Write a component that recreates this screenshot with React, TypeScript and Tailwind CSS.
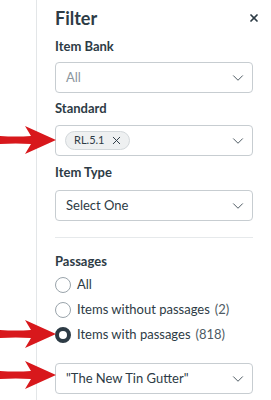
import { X, ChevronDown } from 'lucide-react';

function Arrow({ top }: { top: number }) {
  return (
    <svg
      className="absolute left-0"
      style={{ top }}
      width="57"
      height="30"
      viewBox="0 0 57 30"
    >
      <path
        d="M0 11 Q16 12 31 11 L25 1 L56 15 L25 29 L31 19 Q16 18 0 19 Z"
        fill="#d8181c"
      />
    </svg>
  );
}

function Select({ children, muted }: { children: React.ReactNode; muted?: boolean }) {
  return (
    <div
      className={`h-[31px] border border-[#c7cdd1] rounded-[4px] flex items-center justify-between pl-[10px] pr-[5px] text-[13px] ${
        muted ? 'text-[#8b969e]' : 'text-[#2d3b45]'
      }`}
    >
      <div className="flex items-center whitespace-nowrap">{children}</div>
      <ChevronDown size={18} strokeWidth={1.3} className="text-[#4a5660]" />
    </div>
  );
}

function Radio({ label, count, checked }: { label: string; count?: string; checked?: boolean }) {
  return (
    <div className="flex items-center h-[25px] whitespace-nowrap">
      <span
        className={`shrink-0 w-[16px] h-[16px] rounded-full bg-white ${
          checked ? 'border-[4px] border-[#2d3b45]' : 'border border-[#9aa4ab]'
        }`}
      />
      <span className="ml-[6px] text-[13px] text-[#2d3b45]">{label}</span>
      {count && <span className="ml-[5px] text-[13px] text-[#4f5b64]">{count}</span>}
    </div>
  );
}

function Label({ children, className }: { children: React.ReactNode; className: string }) {
  return (
    <div className={`text-[13px] font-bold text-[#2d3b45] leading-[20px] ${className}`}>{children}</div>
  );
}

export default function App() {
  return (
    <div
      className="relative w-[271px] h-[400px] bg-white overflow-hidden"
      style={{ fontFamily: 'Lato, "Open Sans", sans-serif' }}
    >
      <div className="ml-[36px] h-full border-l border-[#e3e6e8] pl-[18px] pr-[18px] pt-[5px]">
        <div className="flex items-center justify-between h-[26px]">
          <h1 className="text-[18px] font-bold text-[#2d3b45]">Filter</h1>
          <X size={12} strokeWidth={3.5} className="text-[#2d3b45] -mr-[7px]" />
        </div>

        <Label className="mt-[5px]">Item Bank</Label>
        <div className="mt-[6px]">
          <Select muted>All</Select>
        </div>

        <Label className="mt-[5px]">Standard</Label>
        <div className="mt-[7px]">
          <Select>
            <span className="-ml-[1px] flex items-center h-[19px] pl-[8px] pr-[6px] rounded-full bg-[#eef0f1] border border-[#d3d8db] text-[11px] text-[#2d3b45]">
              RL.5.1
              <X size={13} strokeWidth={1.8} className="ml-[5px]" />
            </span>
          </Select>
        </div>

        <Label className="mt-[6px]">Item Type</Label>
        <div className="mt-[8px]">
          <Select>Select One</Select>
        </div>

        <div className="mt-[16px] border-t border-[#e6e9eb]" />

        <Label className="mt-[13px]">Passages</Label>
        <div className="mt-[1px] flex flex-col">
          <Radio label="All" />
          <Radio label="Items without passages" count="(2)" />
          <Radio label="Items with passages" count="(818)" checked />
        </div>

        <div className="mt-[16px]">
          <Select>"The New Tin Gutter"</Select>
        </div>
      </div>

      <Arrow top={125} />
      <Arrow top={319} />
      <Arrow top={360} />
    </div>
  );
}
